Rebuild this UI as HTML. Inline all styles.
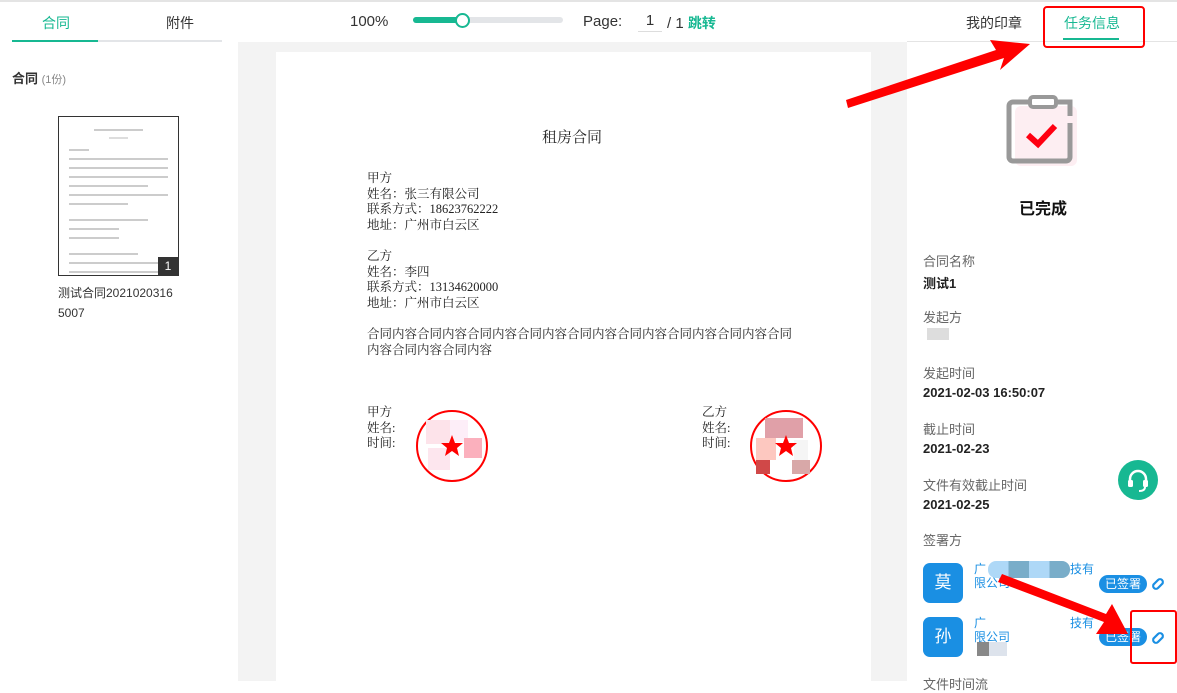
<!DOCTYPE html>
<html><head><meta charset="utf-8"><style>
*{margin:0;padding:0;box-sizing:border-box}
body{width:1177px;height:681px;overflow:hidden;position:relative;background:#fff;font-family:"Liberation Sans","Noto Sans CJK SC",sans-serif;color:#333}
.a{position:absolute}
.doc{font-family:"Liberation Serif","Noto Serif CJK SC",serif;font-size:12.5px;color:#222;line-height:15.6px}
.lbl{font-size:13px;color:#666}
.val{font-size:13px;color:#222;font-weight:bold}
</style></head><body>
<div class="a" style="left:0;top:0;width:1177px;height:2px;background:#e4e4e4"></div>
<div class="a" style="left:42px;top:13px;font-size:14px;color:#17b892">合同</div>
<div class="a" style="left:166px;top:13px;font-size:14px;color:#333">附件</div>
<div class="a" style="left:12px;top:40px;width:210px;height:2px;background:#e3e5e8"></div>
<div class="a" style="left:12px;top:40px;width:86px;height:2px;background:#17b892"></div>
<div class="a" style="left:12px;top:68px;font-size:13px;font-weight:bold;color:#333">合同 <span style="font-weight:normal;font-size:11px;color:#888">(1份)</span></div>
<div class="a" style="left:58px;top:116px;width:121px;height:160px;border:1px solid #333;background:#fff">
 <div style="padding:12px 10px 0 10px">
  <div style="height:2px;background:#ccc;margin:0 25px 6px"></div>
  <div style="height:2px;background:#ddd;margin:0 40px 10px"></div>
  <div style="height:2px;background:#ccc;width:20px;margin-bottom:7px"></div>
  <div style="height:2px;background:#ccc;margin-bottom:7px"></div>
  <div style="height:2px;background:#ccc;margin-bottom:7px"></div>
  <div style="height:2px;background:#ccc;margin-bottom:7px"></div>
  <div style="height:2px;background:#ccc;margin-bottom:7px;width:80%"></div>
  <div style="height:2px;background:#ccc;margin-bottom:7px"></div>
  <div style="height:2px;background:#ccc;margin-bottom:14px;width:60%"></div>
  <div style="height:2px;background:#ccc;margin-bottom:7px;width:80%"></div>
  <div style="height:2px;background:#ccc;margin-bottom:7px;width:50%"></div>
  <div style="height:2px;background:#ccc;margin-bottom:14px;width:50%"></div>
  <div style="height:2px;background:#ccc;margin-bottom:7px;width:70%"></div>
  <div style="height:2px;background:#ccc;margin-bottom:7px"></div>
  <div style="height:2px;background:#ccc;margin-bottom:7px"></div>
 </div>
 <div class="a" style="right:0;bottom:0;width:20px;height:18px;background:#333;color:#fff;font-size:12px;text-align:center;line-height:18px">1</div>
</div>
<div class="a" style="left:58px;top:283px;font-size:12px;line-height:20px;color:#333;width:125px">测试合同2021020316<br>5007</div>
<div class="a" style="left:238px;top:42px;width:669px;height:639px;background:#f3f3f3"></div>
<div class="a" style="left:276px;top:52px;width:595px;height:629px;background:#fff"></div>
<div class="a" style="left:350px;top:13px;font-size:15px;color:#333">100%</div>
<div class="a" style="left:413px;top:17px;width:150px;height:6px;border-radius:3px;background:#e3e5e8"></div>
<div class="a" style="left:413px;top:17px;width:50px;height:6px;border-radius:3px;background:#17b892"></div>
<div class="a" style="left:455px;top:13px;width:15px;height:15px;border-radius:50%;background:#fff;border:2px solid #17b892"></div>
<div class="a" style="left:583px;top:13px;font-size:15px;color:#333">Page:</div>
<div class="a" style="left:638px;top:12px;width:24px;height:20px;border-bottom:1px solid #ddd;font-size:15px;text-align:center;color:#333">1</div>
<div class="a" style="left:667px;top:13px;font-size:15px;color:#333">/ 1 <span style="color:#17b892;font-size:14px;font-weight:bold">跳转</span></div>
<div class="a doc" style="left:542px;top:131px;font-size:15px">租房合同</div>
<div class="a doc" style="left:367px;top:171px">甲方<br>姓名：张三有限公司<br>联系方式：18623762222<br>地址：广州市白云区</div>
<div class="a doc" style="left:367px;top:249px">乙方<br>姓名：李四<br>联系方式：13134620000<br>地址：广州市白云区</div>
<div class="a doc" style="left:367px;top:327px;width:430px">合同内容合同内容合同内容合同内容合同内容合同内容合同内容合同内容合同<br>内容合同内容合同内容</div>
<div class="a doc" style="left:367px;top:405px">甲方<br>姓名:<br>时间:</div>
<div class="a doc" style="left:702px;top:405px">乙方<br>姓名:<br>时间:</div>
<svg class="a" style="left:414px;top:408px" width="76" height="76"><circle cx="38" cy="38" r="35" fill="#fff" stroke="#f00" stroke-width="2"/><rect x="12" y="12" width="24" height="24" fill="#fde3ea"/><rect x="36" y="12" width="18" height="22" fill="#fdeef8"/><rect x="50" y="30" width="18" height="20" fill="#fbb0bd"/><rect x="14" y="40" width="22" height="22" fill="#fde6ee"/><polygon points="38,27 41,35 49,35 43,40 45,48 38,43 31,48 33,40 27,35 35,35" fill="#f00"/></svg>
<svg class="a" style="left:748px;top:408px" width="76" height="76"><circle cx="38" cy="38" r="35" fill="#fff" stroke="#f00" stroke-width="2"/><rect x="17" y="10" width="38" height="20" fill="#e0a0a8"/><rect x="8" y="30" width="20" height="22" fill="#fdc8c0"/><rect x="46" y="32" width="14" height="20" fill="#f5f5f5"/><rect x="44" y="52" width="18" height="14" fill="#d8a8a8"/><rect x="8" y="52" width="14" height="14" fill="#d04848"/><polygon points="38,27 41,35 49,35 43,40 45,48 38,43 31,48 33,40 27,35 35,35" fill="#f00"/></svg>
<div class="a" style="left:907px;top:41px;width:270px;height:1px;background:#e4e4e4"></div>
<div class="a" style="left:966px;top:13px;font-size:14px;color:#333">我的印章</div>
<div class="a" style="left:1064px;top:13px;font-size:14px;color:#17b892">任务信息</div>
<div class="a" style="left:1063px;top:38px;width:56px;height:2px;background:#17b892"></div>
<div class="a" style="left:1043px;top:6px;width:102px;height:42px;border:2px solid #f00;border-radius:4px"></div>
<svg class="a" style="left:1003px;top:94px" width="76" height="76"><rect x="12" y="12" width="62" height="60" rx="6" fill="#fdeef2"/><path d="M29 8 H10 a4 4 0 0 0 -4 4 V63 a4 4 0 0 0 4 4 H63 a4 4 0 0 0 4 -4 V29 M67 22 V8 H52" fill="none" stroke="#999" stroke-width="5"/><rect x="27" y="3" width="26" height="10" rx="3" fill="#fff" stroke="#999" stroke-width="4"/><path d="M25 41 L35 50 L52 32" fill="none" stroke="#f01" stroke-width="6"/></svg>
<div class="a" style="left:1019px;top:195px;font-size:16px;font-weight:bold;color:#111">已完成</div>
<div class="a lbl" style="left:923px;top:251px">合同名称</div>
<div class="a val" style="left:923px;top:273px">测试1</div>
<div class="a lbl" style="left:923px;top:307px">发起方</div>
<div class="a" style="left:927px;top:328px;width:22px;height:12px;background:#ddd"></div>
<div class="a lbl" style="left:923px;top:363px">发起时间</div>
<div class="a val" style="left:923px;top:385px">2021-02-03 16:50:07</div>
<div class="a lbl" style="left:923px;top:419px">截止时间</div>
<div class="a val" style="left:923px;top:441px">2021-02-23</div>
<div class="a lbl" style="left:923px;top:475px">文件有效截止时间</div>
<div class="a val" style="left:923px;top:497px">2021-02-25</div>
<div class="a" style="left:1118px;top:460px;width:40px;height:40px;border-radius:50%;background:#17b892"></div>
<svg class="a" style="left:1118px;top:460px" width="40" height="40"><path d="M12 22 v-3 a8 8 0 0 1 16 0 v3" fill="none" stroke="#fff" stroke-width="2.5"/><rect x="10" y="20" width="5" height="7" rx="1.5" fill="#fff"/><rect x="25" y="20" width="5" height="7" rx="1.5" fill="#fff"/><path d="M27 27 q0 4 -6 4" fill="none" stroke="#fff" stroke-width="2"/></svg>
<div class="a lbl" style="left:923px;top:530px">签署方</div>
<div class="a" style="left:923px;top:563px;width:40px;height:40px;border-radius:7px;background:#1a8fe3;color:#fff;font-size:17px;text-align:center;line-height:40px">莫</div>
<div class="a" style="left:974px;top:562px;font-size:12px;color:#1a8fe3;line-height:14px">广<span style="display:inline-block;width:84px"></span>技有<br>限公司</div>
<div class="a" style="left:988px;top:561px;width:82px;height:17px;border-radius:8px;background:linear-gradient(90deg,#aed8f7 0 25%,#79adc9 25% 50%,#aed8f7 50% 75%,#79adc9 75%)"></div>
<div class="a" style="left:1099px;top:575px;width:48px;height:18px;border-radius:9px;background:#1a8fe3;color:#fff;font-size:12px;text-align:center;line-height:18px">已签署</div>
<div class="a" style="left:923px;top:617px;width:40px;height:40px;border-radius:7px;background:#1a8fe3;color:#fff;font-size:17px;text-align:center;line-height:40px">孙</div>
<div class="a" style="left:974px;top:616px;font-size:12px;color:#1a8fe3;line-height:14px">广<span style="display:inline-block;width:84px"></span>技有<br>限公司</div>
<div class="a" style="left:977px;top:642px;width:30px;height:14px;background:linear-gradient(90deg,#888 0 40%,#dde3ec 40%)"></div>
<div class="a" style="left:1099px;top:628px;width:48px;height:18px;border-radius:9px;background:#1a8fe3;color:#fff;font-size:12px;text-align:center;line-height:18px">已签署</div>
<svg class="a" style="left:1149px;top:575px" width="18" height="18"><path d="M4 10 l5 -5 a2.8 2.8 0 0 1 4 4 M14 8 l-5 5 a2.8 2.8 0 0 1 -4 -4" fill="none" stroke="#1a8fe3" stroke-width="2.2"/></svg>
<svg class="a" style="left:1149px;top:629px" width="18" height="18"><path d="M4 10 l5 -5 a2.8 2.8 0 0 1 4 4 M14 8 l-5 5 a2.8 2.8 0 0 1 -4 -4" fill="none" stroke="#1a8fe3" stroke-width="2.2"/></svg>
<div class="a" style="left:1130px;top:610px;width:47px;height:54px;border:2px solid #f00;border-radius:3px"></div>
<div class="a lbl" style="left:923px;top:674px">文件时间流</div>
<svg class="a" style="left:0;top:0" width="1177" height="681"><path d="M848 108 L1004 58 L1000 70 L1030 44 L990 40 L996 50 L846 100 Z" fill="#f00"/><path d="M998 582 L1104 622 L1096 634 L1128 634 L1112 604 L1106 614 L1002 574 Z" fill="#f00"/></svg>
</body></html>
